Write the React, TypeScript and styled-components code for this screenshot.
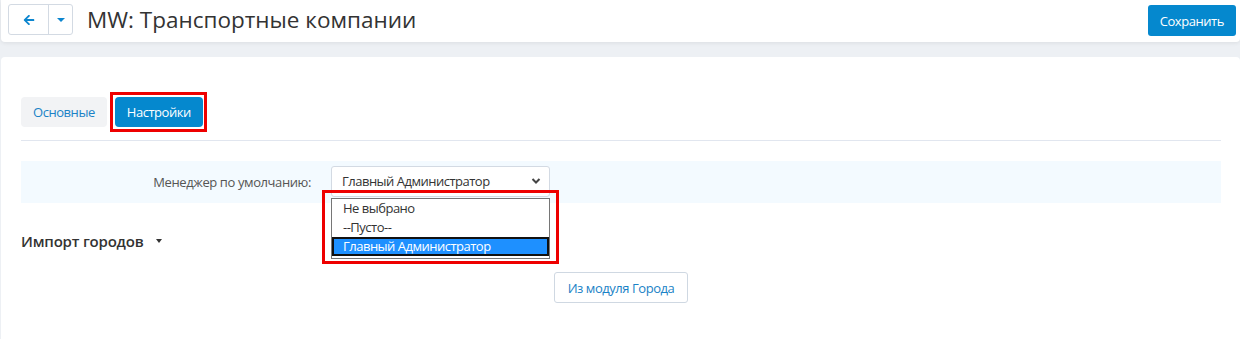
import { FunctionComponent } from "react"
import styled, { createGlobalStyle } from "styled-components"
import { FaArrowLeft } from "react-icons/fa"

const GlobalStyle = createGlobalStyle`
  html, body {
    margin: 0;
    padding: 0;
    background: #edf0f4;
    font-family: "Open Sans", "Liberation Sans", sans-serif;
    color: #333;
  }
  * {
    box-sizing: border-box;
  }
`

const managerOptions = ["Не выбрано", "--Пусто--", "Главный Администратор"]

const App: FunctionComponent = () => {
  return (
    <>
      <GlobalStyle />
      <Page>
        <Header>
          <NavGroup>
            <NavButton>
              <FaArrowLeft size={12} />
            </NavButton>
            <CaretButton>
              <Caret />
            </CaretButton>
          </NavGroup>
          <PageTitle>MW: Транспортные компании</PageTitle>
          <SaveButton>Сохранить</SaveButton>
        </Header>

        <Card>
          <Tabs>
            <Tab>Основные</Tab>
            <Highlight>
              <Tab active>Настройки</Tab>
            </Highlight>
          </Tabs>

          <FormRow>
            <FieldLabel>Менеджер по умолчанию:</FieldLabel>
            <SelectWrap>
              <SelectBox>
                <span>Главный Администратор</span>
                <svg width="10" height="8" viewBox="0 0 10 8">
                  <path d="M1.5 2 L5 5.5 L8.5 2" fill="none" stroke="#444" strokeWidth="2" />
                </svg>
              </SelectBox>
              <OptionList>
                {managerOptions.map((o, i) => (
                  <OptionItem key={o} selected={i === managerOptions.length - 1}>
                    {o}
                  </OptionItem>
                ))}
              </OptionList>
            </SelectWrap>
          </FormRow>

          <SectionTitle>
            Импорт городов <Caret dark />
          </SectionTitle>

          <ActionRow>
            <OutlineButton>Из модуля Города</OutlineButton>
          </ActionRow>
        </Card>
      </Page>
    </>
  )
}

const Page = styled.div`
  min-height: 339px;
  display: flex;
  flex-direction: column;
`

const Header = styled.div`
  height: 42px;
  margin-left: 1px;
  padding: 4px 4px 0 7px;
  display: flex;
  align-items: flex-start;
  background: #fff;
  border-radius: 0 0 4px 4px;
  box-shadow: 0 1px 4px rgba(0, 0, 0, 0.08);
`

const NavGroup = styled.div`
  display: flex;
  height: 31px;
  border: 1px solid #d3dae3;
  border-radius: 3px;
  background: #fff;
`

const NavButton = styled.div`
  width: 39px;
  display: flex;
  align-items: center;
  justify-content: center;
  color: #0c86cf;
`

const CaretButton = styled(NavButton)`
  width: 24px;
  border-left: 1px solid #d3dae3;
`

const Caret = styled.span<{ dark?: boolean }>`
  display: inline-block;
  width: 0;
  height: 0;
  border-left: ${(p) => (p.dark ? "3.5px" : "4px")} solid transparent;
  border-right: ${(p) => (p.dark ? "3.5px" : "4px")} solid transparent;
  border-top: 4px solid ${(p) => (p.dark ? "#333" : "#0c86cf")};
  vertical-align: middle;
`

const PageTitle = styled.h1`
  margin: 0 0 0 14px;
  flex: 1;
  font-size: 22.5px;
  font-weight: 400;
  line-height: 31px;
  color: #333;
`

const SaveButton = styled.button`
  height: 31px;
  margin-top: 1px;
  padding: 0 12px;
  border: none;
  border-radius: 3px;
  background: #0588ce;
  color: #fff;
  font-family: inherit;
  font-size: 13px;
  letter-spacing: -0.45px;
`

const Card = styled.div`
  flex: 1;
  margin: 15px 0 0 1px;
  padding: 40px 19px 0 20px;
  background: #fff;
  border-radius: 4px 4px 0 0;
`

const Tabs = styled.div`
  display: flex;
  gap: 8px;
  padding-bottom: 13px;
  border-bottom: 1px solid #e1e6ef;
`

const Tab = styled.div<{ active?: boolean }>`
  height: 30px;
  padding: 0 12px;
  display: flex;
  align-items: center;
  border-radius: 4px;
  font-size: 13px;
  letter-spacing: -0.45px;
  background: ${(p) => (p.active ? "#0588ce" : "#f2f3f5")};
  color: ${(p) => (p.active ? "#fff" : "#1a82c6")};
`

const Highlight = styled.div`
  position: relative;
  &::after {
    content: "";
    position: absolute;
    inset: -5px -4px -5px -5px;
    border: 3px solid #ee0000;
    pointer-events: none;
  }
`

const FormRow = styled.div`
  margin-top: 20px;
  height: 42px;
  display: grid;
  grid-template-columns: 290px 219px;
  column-gap: 20px;
  align-items: center;
  background: #f3faff;
`

const FieldLabel = styled.div`
  text-align: right;
  font-size: 13px;
  letter-spacing: -0.4px;
  color: #555;
`

const SelectWrap = styled.div`
  position: relative;
  margin-top: -2px;
`

const SelectBox = styled.div`
  height: 31px;
  padding: 0 8px 0 10px;
  display: flex;
  align-items: center;
  justify-content: space-between;
  background: #fff;
  border: 1px solid #d3dae3;
  border-radius: 3px;
  font-size: 13px;
  letter-spacing: -0.5px;
  color: #333;
`

const OptionList = styled.div`
  position: absolute;
  top: 32px;
  left: 0;
  width: 219px;
  padding: 0 0 2px;
  background: #fff;
  border: 1px solid #767676;
  z-index: 2;
  &::after {
    content: "";
    position: absolute;
    left: -10px;
    right: -10px;
    top: -9px;
    bottom: -6px;
    border: 3px solid #ee0000;
    pointer-events: none;
  }
`

const OptionItem = styled.div<{ selected?: boolean }>`
  height: 19px;
  padding: 0 9px;
  display: flex;
  align-items: center;
  font-size: 13px;
  letter-spacing: -0.5px;
  color: ${(p) => (p.selected ? "#fff" : "#333")};
  background: ${(p) => (p.selected ? "#1e90ff" : "transparent")};
  border: 2px solid ${(p) => (p.selected ? "#111" : "transparent")};
`

const SectionTitle = styled.h3`
  margin: 28px 0 0;
  display: flex;
  align-items: center;
  gap: 13px;
  font-size: 15px;
  font-weight: 600;
  line-height: 20px;
  letter-spacing: -0.2px;
  color: #333;
`

const ActionRow = styled.div`
  margin-top: 21px;
  display: flex;
  justify-content: center;
`

const OutlineButton = styled.button`
  height: 31px;
  padding: 0 13px;
  background: #fff;
  border: 1px solid #cfd8e2;
  border-radius: 3px;
  color: #1a82c6;
  font-family: inherit;
  font-size: 13px;
  letter-spacing: -0.45px;
`

export default App
